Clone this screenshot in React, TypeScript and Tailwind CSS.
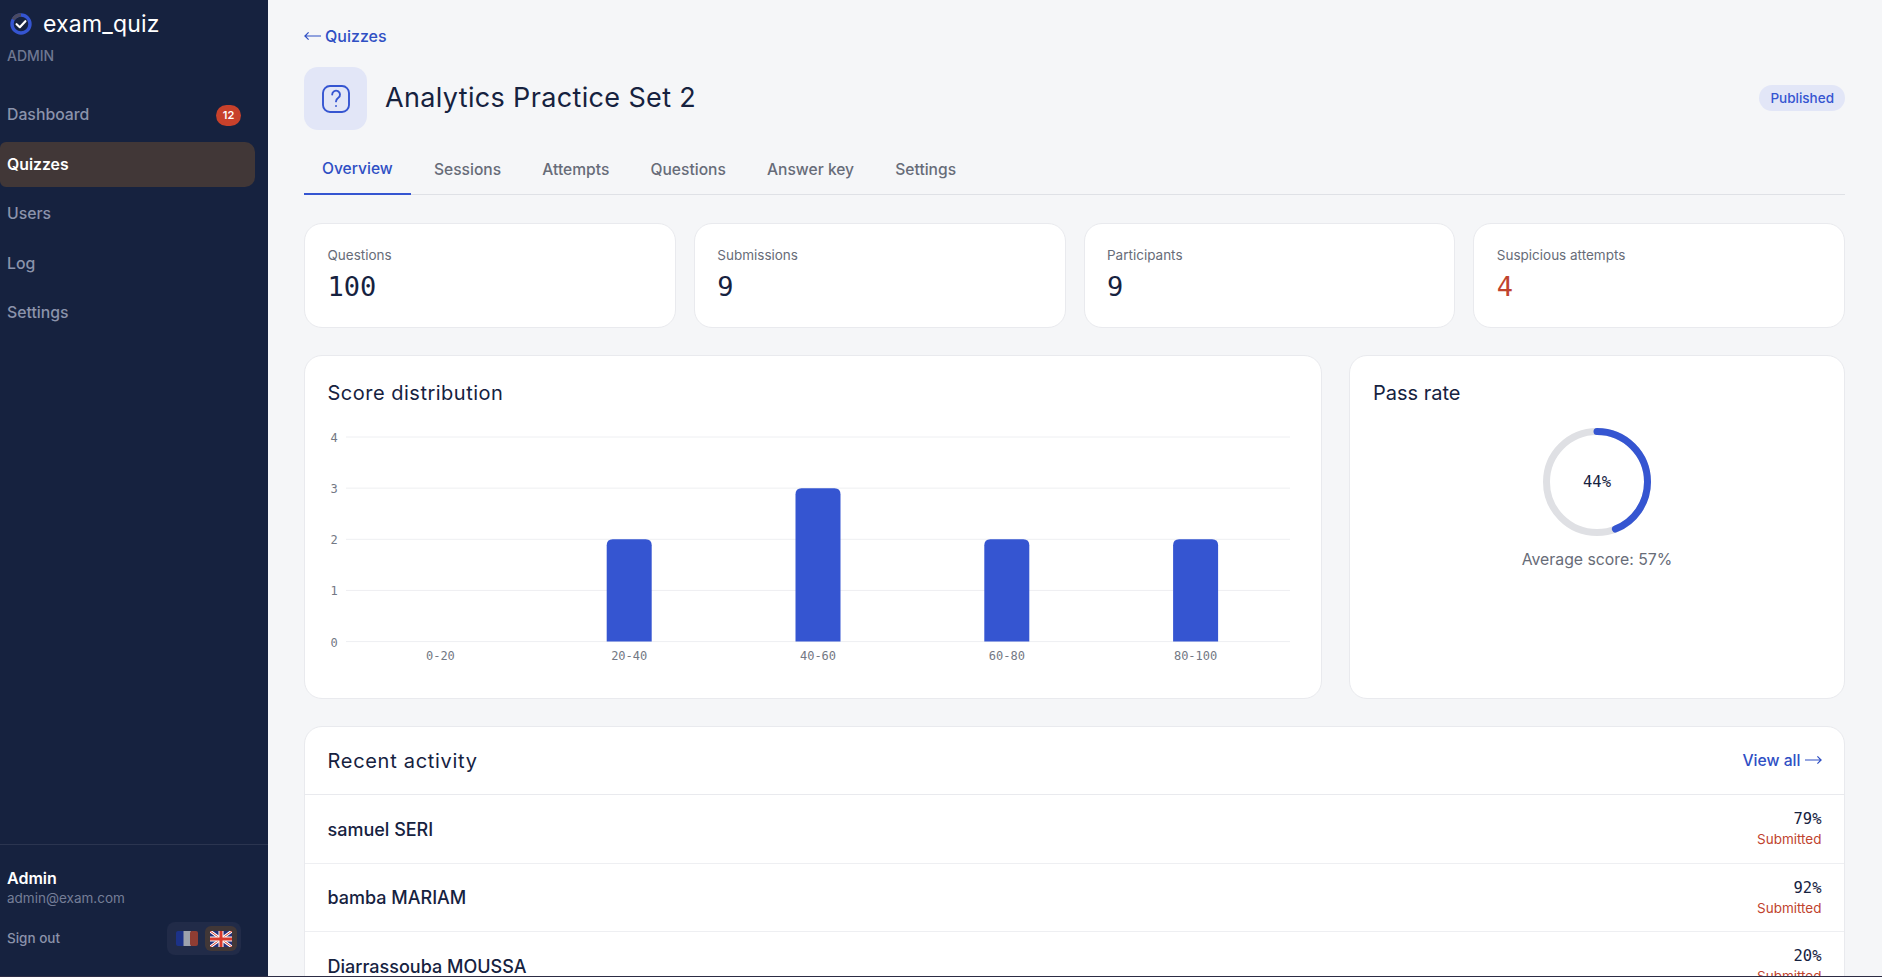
const INTER = "font-['Inter',sans-serif]";

const NAV = [
  { label: "Dashboard", badge: 12 },
  { label: "Quizzes", active: true },
  { label: "Users" },
  { label: "Log" },
  { label: "Settings" },
];

const TABS = ["Overview", "Sessions", "Attempts", "Questions", "Answer key", "Settings"];

const STATS = [
  { label: "Questions", value: "100" },
  { label: "Submissions", value: "9" },
  { label: "Participants", value: "9" },
  { label: "Suspicious attempts", value: "4", danger: true },
];

const BARS = [
  { label: "0-20", value: 0 },
  { label: "20-40", value: 2 },
  { label: "40-60", value: 3 },
  { label: "60-80", value: 2 },
  { label: "80-100", value: 2 },
];

const ACTIVITY = [
  { name: "samuel SERI", score: "79%" },
  { name: "bamba MARIAM", score: "92%" },
  { name: "Diarrassouba MOUSSA", score: "20%" },
];

function Logo() {
  return (
    <svg width="22" height="22" viewBox="0 0 22 22" fill="none">
      <circle cx="11" cy="11" r="9" stroke="#3555d1" strokeWidth="3.4" />
      <path d="M3.2 6.5A9 9 0 0 1 11 2" stroke="#4a4a62" strokeWidth="3.4" />
      <path d="M6.6 11.2l3.2 3 5.6-6" stroke="#fff" strokeWidth="2.2" strokeLinecap="round" strokeLinejoin="round" />
    </svg>
  );
}

function FlagFr() {
  return (
    <svg width="22" height="15" viewBox="0 0 22 15">
      <rect width="9" height="15" rx="2" fill="#1c3288" />
      <rect x="7.5" width="7.5" height="15" fill="#9da2ad" />
      <rect x="14" width="8" height="15" rx="2" fill="#8f3d33" />
    </svg>
  );
}

function FlagUk() {
  return (
    <svg width="22" height="16" viewBox="0 0 22 16">
      <rect width="22" height="16" rx="1.5" fill="#26307a" />
      <path d="M0 0l22 16M22 0L0 16" stroke="#fff" strokeWidth="3" />
      <path d="M0 0l22 16M22 0L0 16" stroke="#d8392b" strokeWidth="1" />
      <path d="M11 0v16M0 8h22" stroke="#fff" strokeWidth="5" />
      <path d="M11 0v16M0 8h22" stroke="#d8392b" strokeWidth="3" />
    </svg>
  );
}

function Sidebar() {
  return (
    <aside className="w-[268px] shrink-0 h-full bg-[#16223f] flex flex-col">
      <div className="pl-[9px] pt-[9px]">
        <div className="flex items-center gap-[11px] h-[30px]">
          <span className="ml-[1px] flex">
            <Logo />
          </span>
          <span className="text-[23px] leading-[30px] tracking-[0.2px] text-white">exam_quiz</span>
        </div>
        <p className="-ml-[2px] mt-[8px] text-[14px] leading-[18px] font-medium text-[#6f7892]">ADMIN</p>
      </div>

      <nav className="mt-[27.5px] pr-[13px] flex flex-col gap-[4.5px]">
        {NAV.map((item) => (
          <div
            key={item.label}
            className={`h-[45px] pl-[7px] pr-[14px] flex items-center justify-between rounded-r-[10px] rounded-l-[6px] text-[15.8px] font-medium ${
              item.active ? "bg-[#413737] text-white font-semibold" : "text-[#8b93ab]"
            }`}
          >
            <span>{item.label}</span>
            {item.badge && (
              <span className="w-[25px] h-[21px] rounded-full bg-[#c8412b] text-white text-[11px] font-semibold flex items-center justify-center">
                {item.badge}
              </span>
            )}
          </div>
        ))}
      </nav>

      <div className="mt-auto border-t border-[#2b3550] h-[132px] pl-[7px] pr-[27px] pt-[23px]">
        <p className="text-[16px] leading-[20px] font-semibold text-white">Admin</p>
        <p className="text-[13.5px] leading-[20px] text-[#757e97]">admin@exam.com</p>
        <div className="mt-[14px] flex items-center justify-between">
          <span className="text-[13.5px] font-medium text-[#8b93ab]">Sign out</span>
          <div className="w-[74px] h-[33px] rounded-[8px] bg-[#212b48] flex items-center justify-between pl-[4px] pr-[4px]">
            <span className="w-[32px] h-[25px] flex items-center justify-center">
              <FlagFr />
            </span>
            <span className="w-[32px] h-[25px] rounded-[6px] bg-[#413737] flex items-center justify-center">
              <FlagUk />
            </span>
          </div>
        </div>
      </div>
    </aside>
  );
}

function Card({ className = "", children }: { className?: string; children: React.ReactNode }) {
  return <div className={`bg-white border border-[#e9eaee] rounded-[18px] ${className}`}>{children}</div>;
}

function ScoreChart() {
  const left = 18;
  const step = 188.8;
  const zero = 218.6;
  const unit = 51.15;
  const mono = "'DejaVu Sans Mono', monospace";
  return (
    <svg width="990" height="242" viewBox="0 0 990 242" className="block">
      {[0, 1, 2, 3, 4].map((v) => {
        const y = zero - v * unit;
        return (
          <g key={v}>
            <line x1={left} x2={left + 944} y1={y} y2={y} stroke="#eeeff2" strokeWidth="1" />
            <text x="6" y={y + 5} textAnchor="middle" fontSize="12" fill="#737884" fontFamily={mono}>
              {v}
            </text>
          </g>
        );
      })}
      {BARS.map((b, i) => {
        const cx = left + step * (i + 0.5);
        const h = b.value * unit;
        const top = zero - h;
        return (
          <g key={b.label}>
            {b.value > 0 && (
              <path d={`M${cx - 22.5} ${zero}V${top + 6}q0-6 6-6h33q6 0 6 6V${zero}z`} fill="#3555d1" />
            )}
            <text x={cx} y="237" textAnchor="middle" fontSize="12" fill="#737884" fontFamily={mono}>
              {b.label}
            </text>
          </g>
        );
      })}
    </svg>
  );
}

function PassRing({ pct }: { pct: number }) {
  const r = 50.5;
  const c = 2 * Math.PI * r;
  return (
    <div className="relative w-[108px] h-[108px]">
      <svg width="108" height="108" viewBox="0 0 108 108" className="-rotate-90">
        <circle cx="54" cy="54" r={r} fill="none" stroke="#dfe0e4" strokeWidth="7" />
        <circle
          cx="54"
          cy="54"
          r={r}
          fill="none"
          stroke="#3555d1"
          strokeWidth="7"
          strokeLinecap="round"
          strokeDasharray={`${(c * pct) / 100} ${c}`}
        />
      </svg>
      <span className="absolute inset-0 pt-[1px] flex items-center justify-center font-['DejaVu_Sans_Mono',monospace] text-[15.5px] text-[#16223f]">
        {pct}%
      </span>
    </div>
  );
}

export default function App() {
  return (
    <div className={`w-[1882px] h-[977px] overflow-hidden bg-[#2c2c44] ${INTER}`}>
      <div className="h-[976px] flex overflow-hidden">
        <Sidebar />
        <main className="flex-1 min-w-0 bg-[#f5f6f8] pl-[36px] pr-[37px] pt-[25px]">
          <a className="flex items-center gap-[4px] h-[22px] text-[16px] font-medium text-[#2f4fc4]">
            <svg width="17" height="10" viewBox="0 0 17 10" fill="none" stroke="currentColor" strokeWidth="1.2">
              <path d="M.8 5H17M4.6 1.4L.9 5l3.7 3.6" />
            </svg>
            Quizzes
          </a>

          <div className="mt-[20px] flex items-center justify-between">
            <div className="flex items-center gap-[18px]">
              <div className="w-[63px] h-[63px] rounded-[14px] bg-[#e2e6f7] flex items-center justify-center">
                <svg width="28" height="28" viewBox="0 0 28 28" fill="none" stroke="#3555d1" strokeWidth="1.9" strokeLinecap="round" strokeLinejoin="round">
                  <rect x="1" y="1" width="26" height="26" rx="7" />
                  <path d="M10.2 9.6a3.9 3.9 0 1 1 6.1 3.2c-1.4 1-2.3 1.8-2.3 3.6" />
                  <path d="M14 21h.01" />
                </svg>
              </div>
              <h1 className="-mt-[2px] text-[27px] leading-[36px] tracking-[0.35px] text-[#16223f] font-normal">Analytics Practice Set 2</h1>
            </div>
            <span className="-mt-[1px] h-[26px] px-[11px] rounded-full bg-[#e2e6f7] text-[#3555d1] text-[13.5px] font-medium flex items-center">
              Published
            </span>
          </div>

          <div className="mt-[21px] h-[44px] flex border-b border-[#dfe1e6]">
            {TABS.map((t, i) => (
              <div
                key={t}
                className={`h-[44px] px-[18px] mr-[5.2px] pb-[6px] flex items-center text-[15.6px] font-medium ${
                  i === 0 ? "text-[#2f4fc4] border-b-2 border-[#3555d1]" : "text-[#676c78]"
                }`}
              >
                {t}
              </div>
            ))}
          </div>

          <div className="mt-[28px] grid grid-cols-4 gap-[18px]">
            {STATS.map((s) => (
              <Card key={s.label} className="h-[105px] px-[22.5px] pt-[21px]">
                <p className="text-[13.5px] leading-[20px] text-[#676c78]">{s.label}</p>
                <p
                  className={`mt-[5px] text-[27px] leading-[34px] font-['DejaVu_Sans_Mono',monospace] ${
                    s.danger ? "text-[#c0432e]" : "text-[#16223f]"
                  }`}
                >
                  {s.value}
                </p>
              </Card>
            ))}
          </div>

          <div className="mt-[27px] grid grid-cols-[1018px_496px] gap-[27px]">
            <Card className="h-[344px] pl-[22.5px] pt-[23px]">
              <h2 className="text-[20px] leading-[28px] tracking-[0.5px] text-[#16223f]">Score distribution</h2>
              <div className="mt-[16px]">
                <ScoreChart />
              </div>
            </Card>
            <Card className="h-[344px] px-[23px] pt-[23px]">
              <h2 className="text-[20px] leading-[28px] text-[#16223f]">Pass rate</h2>
              <div className="mt-[21px] flex flex-col items-center">
                <PassRing pct={44} />
                <p className="mt-[13px] text-[15.8px] leading-[22px] text-[#676c78]">Average score: 57%</p>
              </div>
            </Card>
          </div>

          <Card className="mt-[27px] overflow-hidden">
            <div className="h-[68px] px-[22.5px] flex items-center justify-between border-b border-[#e9eaee]">
              <h2 className="text-[20px] tracking-[0.7px] text-[#16223f]">Recent activity</h2>
              <span className="flex items-center gap-[4px] text-[15.7px] font-medium text-[#2f4fc4]">
                View all
                <svg width="17" height="10" viewBox="0 0 17 10" fill="none" stroke="currentColor" strokeWidth="1.2">
                  <path d="M0 5h16.2M12.4 1.4L16.1 5l-3.7 3.6" />
                </svg>
              </span>
            </div>
            {ACTIVITY.map((a) => (
              <div key={a.name} className="h-[68.5px] px-[22.5px] pt-[1px] flex items-center justify-between border-b border-[#eeeff2]">
                <span className="text-[18px] font-medium text-[#16223f]">{a.name}</span>
                <div className="text-right">
                  <p className="text-[15.5px] leading-[20px] font-['DejaVu_Sans_Mono',monospace] text-[#16223f]">{a.score}</p>
                  <p className="text-[13.5px] leading-[20px] text-[#c0432e]">Submitted</p>
                </div>
              </div>
            ))}
          </Card>
        </main>
      </div>
    </div>
  );
}
